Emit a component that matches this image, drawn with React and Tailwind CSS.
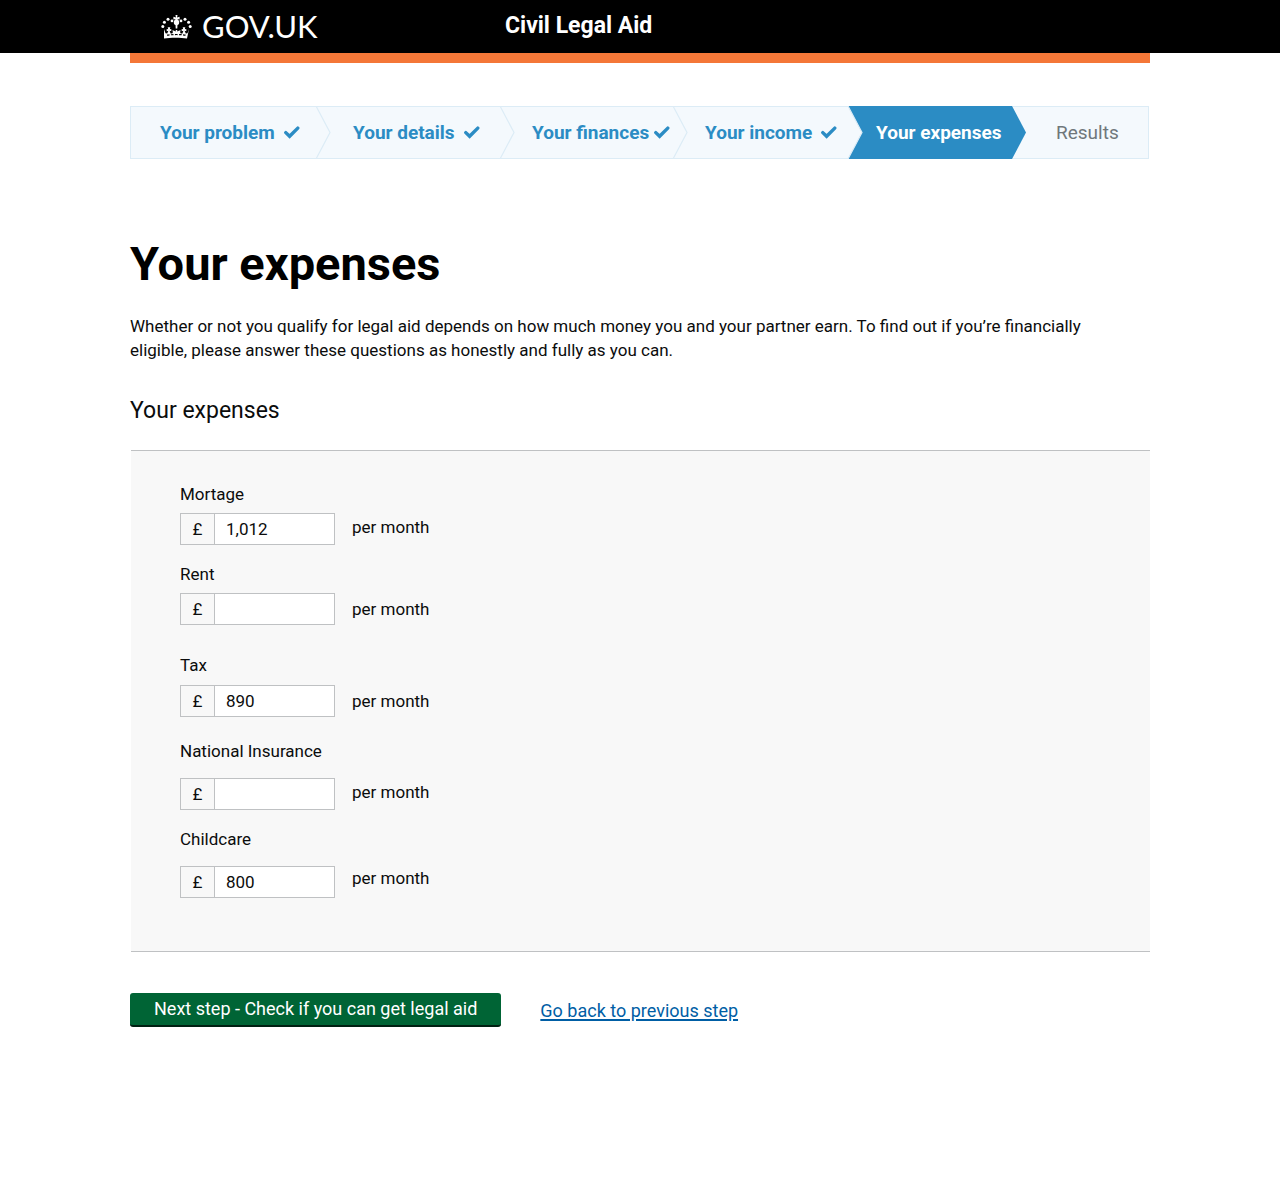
import React from "react";

const steps = [
  { name: "Your problem", state: "done", inner: "pl-[29px] gap-[9px]" },
  { name: "Your details", state: "done", inner: "pl-[37px] gap-[9px]" },
  { name: "Your finances", state: "done", inner: "pl-[32px] gap-[5px]" },
  { name: "Your income", state: "done", inner: "pl-[32px] gap-[9px]" },
  { name: "Your expenses", state: "current", inner: "pl-[28px]" },
  { name: "Results", state: "todo", inner: "pl-[44px]" },
];

const fields = [
  { id: "mortgage", label: "Mortage", value: "1,012", wrap: "", row: "mt-[7px] items-start", unit: "leading-7" },
  { id: "rent", label: "Rent", value: "", wrap: "mt-[17px]", row: "mt-[7px] items-center", unit: "leading-7" },
  { id: "tax", label: "Tax", value: "890", wrap: "mt-7", row: "mt-2 items-center", unit: "leading-7" },
  { id: "insurance", label: "National Insurance", value: "", wrap: "mt-[22px]", row: "mt-[15px] items-start", unit: "leading-7" },
  { id: "childcare", label: "Childcare", value: "800", wrap: "mt-[17px]", row: "mt-[15px] items-start", unit: "leading-6" },
];

function Crown() {
  return (
    <svg width="31" height="24" viewBox="0 0 31 24" fill="#fff" aria-hidden="true">
      <circle cx="1.800" cy="11.600" r="1.500" />
      <circle cx="3.400" cy="7.200" r="1.500" />
      <circle cx="7" cy="4.200" r="1.500" />
      <circle cx="11" cy="5.900" r="1.400" />
      <circle cx="20" cy="5.900" r="1.400" />
      <circle cx="24" cy="4.200" r="1.500" />
      <circle cx="27.600" cy="7.200" r="1.500" />
      <circle cx="29.200" cy="11.600" r="1.500" />
      <path d="M14.500 0h2l-.4 2.400 2.500-.6v2.800l-2.400-.6c1.300 1 2 2.100 2 3.400 0 1.300-.8 2.200-1.700 2.700l-.2 3.400h-1.600l-.2-3.400c-.9-.5-1.700-1.400-1.700-2.700 0-1.300.7-2.400 2-3.400l-2.400.6V1.800l2.500.6z" />
      <path d="M3 14l1.500 4.200 1.700.2 1.200-2.700-1.700.5v-2.200l1.500.3-.5-2h2.600l-.5 2 1.500-.3v2.200l-1.700-.5 1 2.700h1.600l.8-1.300-.9-1.700 1.700.2 1.800 1 .2-1.700h1.400l.2 1.700 1.800-1 1.700-.2-.9 1.700.8 1.300h1.600l1-2.700-1.700.5v-2.200l1.500.3-.5-2h2.600l-.5 2 1.500-.3v2.200l-1.700-.5 1.200 2.700 1.700-.2 1.500-4.200-2 9.500c-6.200-.9-16.800-.9-23 0z" />
      <path d="M6 20.200c6-.9 13-.9 19 0" fill="none" stroke="#000" strokeWidth="1.200" strokeDasharray="2.600 1.400" />
    </svg>
  );
}

function Tick() {
  return (
    <svg className="shrink-0" width="16" height="13" viewBox="0 0 16 13" fill="none" stroke="#2b8cc4" strokeWidth="3.400" aria-hidden="true">
      <path d="M1.800 6.600l3.800 3.700 8.200-8.200" strokeLinecap="round" />
    </svg>
  );
}

function Step({ step, last }) {
  const current = step.state === "current";
  const tone = {
    done: "bg-[#f4f9fd] border-[#dcecf6] text-[#2b8cc4] font-bold",
    current: "bg-[#2b8cc4] border-[#2b8cc4] text-white font-bold",
    todo: "bg-[#f4f9fd] border-[#dcecf6] text-[#6f777b]",
  }[step.state];
  return (
    <li className={`relative flex h-[53px] items-center border-y ${tone} ${last ? "border-r" : ""}`}>
      <a
        href="#"
        aria-current={current ? "step" : undefined}
        className={`flex items-center whitespace-nowrap text-[19px] leading-6 ${step.inner}`}
      >
        {step.name}
        {step.state === "done" && <Tick />}
      </a>
      {!last && (
        <svg className="absolute -top-px left-full z-10" width="15" height="53" viewBox="0 0 15 53" aria-hidden="true">
          <path d="M-1 0H0L14 26.500 0 53H-1z" fill={current ? "#2b8cc4" : "#f4f9fd"} />
          {!current && <path d="M0 0l14 26.500L0 53" fill="none" stroke="#dcecf6" strokeWidth="1.200" />}
        </svg>
      )}
    </li>
  );
}

function Field({ field }) {
  return (
    <div className={field.wrap}>
      <label htmlFor={field.id} className="block">
        {field.label}
      </label>
      <div className={`flex ${field.row}`}>
        <div className="flex h-8 w-[155px] border border-[#bfc1c3]">
          <span className="flex w-[34px] shrink-0 items-center justify-center border-r border-[#bfc1c3]">£</span>
          <input
            id={field.id}
            type="text"
            defaultValue={field.value}
            className="w-full min-w-0 bg-white px-[11px] outline-none"
          />
        </div>
        <span className={`ml-[17px] ${field.unit}`}>per month</span>
      </div>
    </div>
  );
}

export default function App() {
  return (
    <div className="min-h-screen bg-white font-['Roboto',sans-serif] text-[17px] leading-6 text-[#0b0c0c]">
      <header className="bg-black text-white">
        <div className="mx-auto flex h-[53px] max-w-[1020px]">
          <a href="#" className="flex w-[375px] items-center gap-[10px] pl-[31px]">
            <Crown />
            <span className="pb-[2px] font-['Lato',sans-serif] text-[31px] leading-8">GOV.UK</span>
          </a>
          <span className="pt-[10px] text-[23px] leading-8 font-bold">Civil Legal Aid</span>
        </div>
      </header>

      <main className="mx-auto max-w-[1020px]">
        <div className="h-[10px] bg-[#f47738]" />

        <nav aria-label="Progress" className="mt-[43px] mr-px">
          <ol className="grid grid-cols-[185fr_184fr_173fr_175fr_164fr_137fr] border-l border-[#dcecf6]">
            {steps.map((step, i) => (
              <Step key={step.name} step={step} last={i === steps.length - 1} />
            ))}
          </ol>
        </nav>

        <h1 className="mt-[77px] text-[47px] leading-[56px] font-bold text-black">Your expenses</h1>
        <p className="mt-[22px] pr-10">
          Whether or not you qualify for legal aid depends on how much money you and your partner earn. To find out if
          you’re financially eligible, please answer these questions as honestly and fully as you can.
        </p>

        <form>
          <h2 className="mt-[33px] text-[23px] leading-8">Your expenses</h2>
          <div className="mt-[23px] ml-px border-y border-[#bfc1c3] bg-[#f8f8f8] px-[49px] pt-[31px] pb-[53px]">
            {fields.map((field) => (
              <Field key={field.id} field={field} />
            ))}
          </div>
          <div className="mt-[41px] flex items-start gap-[39px]">
            <button
              type="button"
              className="h-[34px] rounded-[3px] border-b-2 border-[#002012] bg-[#006435] px-6 text-lg leading-8 text-white"
            >
              Next step - Check if you can get legal aid
            </button>
            <a href="#" className="text-lg leading-9 text-[#005ea5] underline decoration-2 underline-offset-2">
              Go back to previous step
            </a>
          </div>
        </form>
      </main>
    </div>
  );
}
